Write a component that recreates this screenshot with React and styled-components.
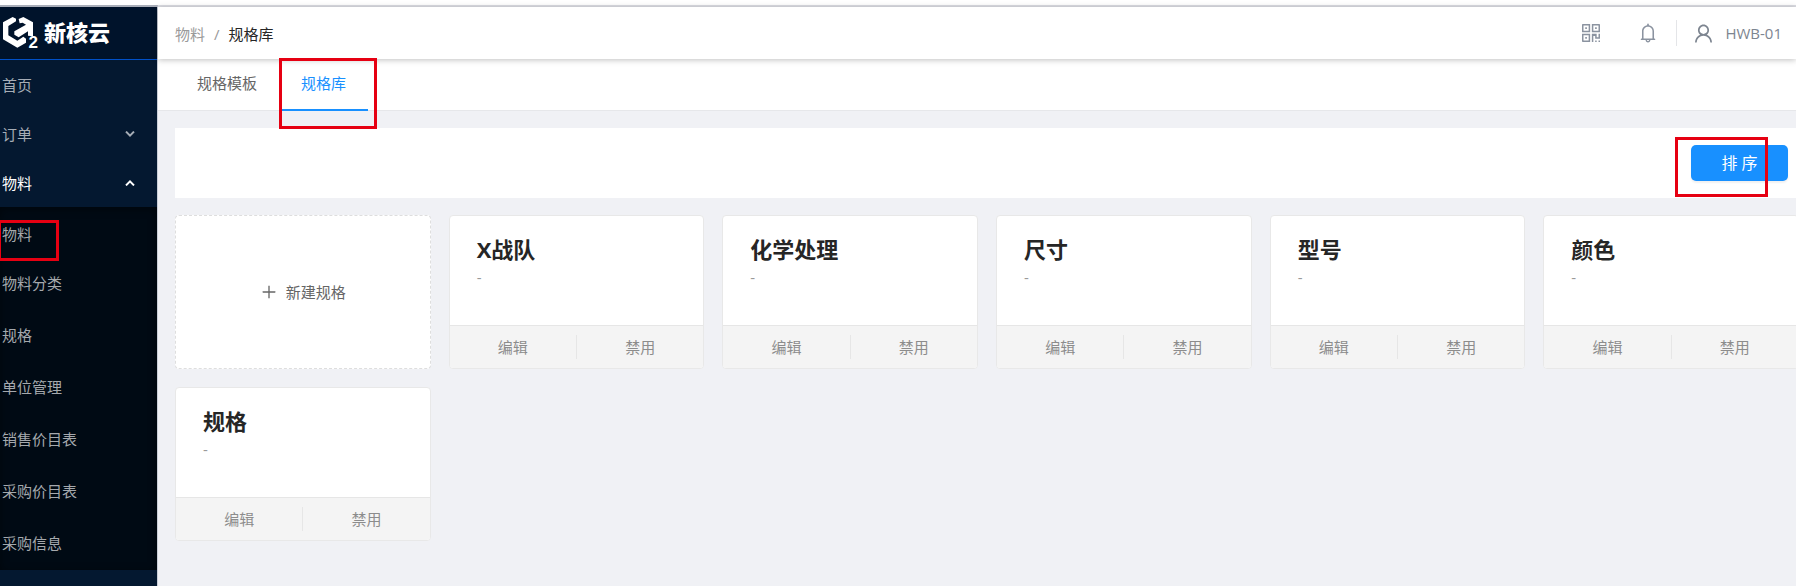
import React from 'react';
import styled, { createGlobalStyle } from 'styled-components';
import { AiOutlineBell, AiOutlinePlus, AiOutlineQrcode, AiOutlineUser } from 'react-icons/ai';

const subMenu = ['物料', '物料分类', '规格', '单位管理', '销售价目表', '采购价目表', '采购信息'];

const specs = ['X战队', '化学处理', '尺寸', '型号', '颜色', '规格'];

const Chevron = ({ up }) => (
    <svg width="10" height="6" viewBox="0 0 10 6" fill="none" stroke="currentColor" strokeWidth="2">
        <path d={up ? 'M1 5.4L5 1.4L9 5.4' : 'M1 0.6L5 4.6L9 0.6'} />
    </svg>
);

const Logo = () => (
    <LogoBar>
        <LogoMark>
            <svg width="36" height="34" viewBox="6 38 108 102" fill="#fff">
                <path d="M38 41L9 57V108L52 133L78 118V106L70 100L52 112L25 96V68L48 54V46Z" />
                <path d="M56 47L70 41L99 57V99L84 97V84L56 102L43 94V84L78 64L68 58L59 60Z" />
            </svg>
            <LogoTwo>2</LogoTwo>
        </LogoMark>
        <LogoName>新核云</LogoName>
    </LogoBar>
);

const SpecCard = ({ name }) => (
    <Card>
        <CardBody>
            <CardTitle>{name}</CardTitle>
            <CardText>-</CardText>
        </CardBody>
        <CardActions>
            <CardAction type="button">编辑</CardAction>
            <CardAction type="button">禁用</CardAction>
        </CardActions>
    </Card>
);

const App = () => {
    const [tab, setTab] = React.useState('规格库');
    const [open, setOpen] = React.useState(true);

    return (
        <>
            <GlobalStyle />
            <Page>
                <Sidebar>
                    <Logo />
                    <MenuItem as="a" href="#home">首页</MenuItem>
                    <MenuItem type="button">订单<Chevron /></MenuItem>
                    <MenuItem type="button" $active onClick={() => setOpen(!open)}>物料<Chevron up={open} /></MenuItem>
                    {open && (
                        <SubMenu>
                            {subMenu.map((item, idx) => (
                                <SubItem key={item} href={`#sub-${idx}`}>
                                    {item}
                                    {idx === 0 && <MenuMark />}
                                </SubItem>
                            ))}
                        </SubMenu>
                    )}
                </Sidebar>

                <Main>
                    <Header>
                        <Crumbs>
                            <Crumb href="#material">物料</Crumb>
                            <span>/</span>
                            <Current>规格库</Current>
                        </Crumbs>
                        <Tools>
                            <IconButton type="button" aria-label="二维码"><AiOutlineQrcode size={24} /></IconButton>
                            <IconButton type="button" aria-label="通知"><AiOutlineBell size={22} /></IconButton>
                            <User type="button"><AiOutlineUser size={23} />HWB-01</User>
                        </Tools>
                    </Header>
                    <Tabs>
                        {['规格模板', '规格库'].map((name) => (
                            <Tab key={name} type="button" $active={tab === name} onClick={() => setTab(name)}>
                                {name}
                                {name === '规格库' && <TabMark />}
                            </Tab>
                        ))}
                    </Tabs>
                    <Content>
                        <Toolbar>
                            <SortWrap>
                                <SortButton type="button">排 序</SortButton>
                                <SortMark />
                            </SortWrap>
                        </Toolbar>
                        <Grid>
                            <NewCard type="button"><AiOutlinePlus size={18} />新建规格</NewCard>
                            {specs.map((name) => <SpecCard key={name} name={name} />)}
                        </Grid>
                    </Content>
                </Main>
            </Page>
        </>
    );
};

const GlobalStyle = createGlobalStyle`
    * { box-sizing: border-box; }
    body {
        margin: 0;
        overflow: hidden;
        background: #fff;
        font-family: "Open Sans", "Noto Sans CJK SC", sans-serif;
        font-size: 15px;
        line-height: 24px;
    }
    a { text-decoration: none; color: inherit; }
`;

const PlainButton = styled.button`
    padding: 0;
    border: 0;
    background: none;
    font: inherit;
    color: inherit;
    cursor: pointer;
`;

const Page = styled.div`
    display: flex;
    min-height: 100vh;
    padding-top: 5px;
`;

const Sidebar = styled.nav`
    flex: 0 0 158px;
    display: flex;
    flex-direction: column;
    border-top: 2px solid #a9aeb9;
    border-right: 1px solid #c9ced8;
    background: #041830;
`;

const LogoBar = styled.div`
    display: flex;
    align-items: center;
    gap: 6px;
    height: 53px;
    padding: 0 2px;
    border-bottom: 1px solid #0050c8;
    background: #00132b;
`;

const LogoMark = styled.div`
    position: relative;
    display: flex;
`;

const LogoTwo = styled.span`
    position: absolute;
    right: 0;
    bottom: -3px;
    color: #fff;
    font-family: "Liberation Sans", sans-serif;
    font-size: 17px;
    font-weight: 700;
    line-height: 20px;
`;

const LogoName = styled.span`
    padding-bottom: 2px;
    color: #fff;
    font-size: 22px;
    font-weight: 900;
`;

const MenuItem = styled(PlainButton)`
    display: flex;
    align-items: center;
    justify-content: space-between;
    height: 49px;
    padding: 0 22px 0 2px;
    color: ${(props) => (props.$active ? '#fff' : '#a6adb6')};
`;

const SubMenu = styled.div`
    display: flex;
    flex-direction: column;
    padding: 3px 0 1px;
    background: #000a14;
    box-shadow: inset 0 2px 8px rgba(0, 0, 0, 0.45);
`;

const SubItem = styled.a`
    position: relative;
    display: flex;
    align-items: center;
    height: 52px;
    padding-left: 2px;
    color: #a5a9ad;
    &:first-child {
        height: 47px;
    }
`;

const Mark = styled.span`
    position: absolute;
    border: 3px solid #e60012;
    pointer-events: none;
`;

const MenuMark = styled(Mark)`
    top: 10px;
    left: -2px;
    width: 61px;
    height: 41px;
`;

const TabMark = styled(Mark)`
    top: -1px;
    left: 0;
    width: 98px;
    height: 71px;
`;

const SortMark = styled(Mark)`
    top: -8px;
    left: -16px;
    width: 93px;
    height: 60px;
`;

const Main = styled.main`
    flex: 1;
    min-width: 0;
    border-top: 2px solid #dcdde3;
    background: #f0f1f5;
`;

const Header = styled.header`
    position: relative;
    display: flex;
    align-items: center;
    justify-content: space-between;
    height: 52px;
    padding: 0 14px 0 17px;
    background: #fff;
    box-shadow: 0 1px 6px rgba(0, 0, 0, 0.25);
`;

const Crumbs = styled.div`
    display: flex;
    gap: 9px;
    padding-top: 1px;
    color: #999;
`;

const Crumb = styled.a`
    color: #999;
`;

const Current = styled.span`
    color: #262626;
`;

const Tools = styled.div`
    display: flex;
    align-items: center;
    color: #8b93a0;
`;

const IconButton = styled(PlainButton)`
    display: flex;
    align-items: center;
    justify-content: center;
    width: 57px;
    height: 26px;
`;

const User = styled(PlainButton)`
    display: flex;
    align-items: center;
    gap: 10px;
    height: 26px;
    padding-left: 15px;
    border-left: 1px solid #e4e5e8;
    color: #7d8590;
`;

const Tabs = styled.div`
    display: flex;
    height: 52px;
    padding-left: 17px;
    border-bottom: 1px solid #e6e7ea;
    background: #fff;
`;

const Tab = styled(PlainButton)`
    position: relative;
    height: 52px;
    padding: 0 22px 2px;
    border-bottom: 2px solid ${(props) => (props.$active ? '#1890ff' : 'transparent')};
    color: ${(props) => (props.$active ? '#1890ff' : '#666')};
`;

const Content = styled.section`
    margin-right: -3px;
    padding: 17px 0 17px 17px;
`;

const Toolbar = styled.div`
    display: flex;
    align-items: center;
    justify-content: flex-end;
    height: 70px;
    margin-bottom: 17px;
    padding-right: 11px;
    background: #fff;
`;

const SortWrap = styled.div`
    position: relative;
    display: flex;
`;

const SortButton = styled(PlainButton)`
    width: 97px;
    height: 36px;
    border-radius: 5px;
    background: #1890ff;
    box-shadow: 0 2px 2px rgba(0, 0, 0, 0.06);
    color: #fff;
    font-size: 16px;
`;

const Grid = styled.div`
    display: grid;
    grid-template-columns: repeat(6, 1fr);
    gap: 18px;
`;

const Card = styled.article`
    display: flex;
    flex-direction: column;
    height: 154px;
    border: 1px solid #e8e8e8;
    border-radius: 4px;
    background: #fff;
    overflow: hidden;
`;

const NewCard = styled(PlainButton)`
    display: flex;
    align-items: center;
    justify-content: center;
    gap: 8px;
    border: 1px dashed #dedede;
    border-radius: 4px;
    background: #fff;
    color: #666;
`;

const CardBody = styled.div`
    flex: 1;
    padding: 17px 27px;
`;

const CardTitle = styled.h3`
    margin: 0;
    color: #262626;
    font-size: 22px;
    font-weight: 700;
    line-height: 32px;
`;

const CardText = styled.p`
    margin: 0;
    color: #999;
`;

const CardActions = styled.div`
    display: flex;
    align-items: center;
    height: 43px;
    border-top: 1px solid #e6e6e6;
    background: #f4f4f4;
`;

const CardAction = styled(PlainButton)`
    flex: 1;
    color: #8c8c8c;
    & + & {
        border-left: 1px solid #e6e6e6;
    }
`;

export default App;
